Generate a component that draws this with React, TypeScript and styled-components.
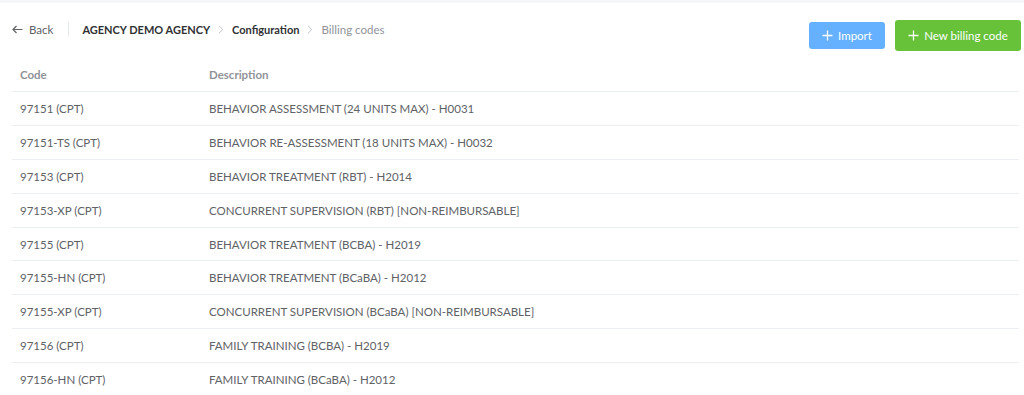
import React from "react";
import styled, { createGlobalStyle } from "styled-components";

const Global = createGlobalStyle`
  html, body { margin: 0; padding: 0; background: #fff; }
  body { font-family: "Lato", "Noto Sans", sans-serif; color: #606266; }
  * { box-sizing: border-box; }
`;

const Page = styled.div`
  width: 1024px;
  height: 395px;
  overflow: hidden;
  border-top: 3px solid #f5f6f8;
`;

const TopBar = styled.div`
  display: flex;
  align-items: center;
  justify-content: space-between;
  padding: 14px 3px 0 12px;
  height: 51px;
`;

const Crumbs = styled.div`
  display: flex;
  align-items: center;
  font-size: 11.5px;
  margin-top: -13px;
`;

const BackLink = styled.span`
  display: flex;
  align-items: center;
  gap: 6px;
  color: #606266;
`;

const Divider = styled.span`
  width: 1px;
  height: 14px;
  background: #e4e7ed;
  margin: 0 13px 0 15px;
`;

const Crumb = styled.span<{ $current?: boolean }>`
  font-weight: ${(p) => (p.$current ? 400 : 700)};
  font-size: ${(p) => (p.$current ? "11.5px" : "11px")};
  color: ${(p) => (p.$current ? "#909399" : "#303133")};
`;

const Sep = styled.span`
  display: flex;
  margin: 0 8px;
`;

const Actions = styled.div`
  display: flex;
  align-items: center;
  gap: 10px;
`;

const Button = styled.button<{ $variant: "blue" | "green" }>`
  display: flex;
  align-items: center;
  justify-content: center;
  gap: 5px;
  border: none;
  border-radius: 3px;
  color: #fff;
  font-family: inherit;
  font-size: 11.5px;
  padding: 0;
  background: ${(p) => (p.$variant === "blue" ? "#66b1ff" : "#67c23a")};
  width: ${(p) => (p.$variant === "blue" ? "76px" : "126px")};
  height: ${(p) => (p.$variant === "blue" ? "27px" : "31px")};
`;

const Table = styled.div`
  margin: 0 5px 0 12px;
`;

const Row = styled.div<{ $head?: boolean }>`
  display: grid;
  grid-template-columns: 189px 1fr;
  align-items: center;
  height: ${(p) => (p.$head ? "38px" : "33.9px")};
  border-bottom: 1px solid #ebeef5;
  font-size: 11.5px;
  color: ${(p) => (p.$head ? "#909399" : "#606266")};
  font-weight: ${(p) => (p.$head ? 700 : 400)};
  padding-left: 8px;
  padding-top: ${(p) => (p.$head ? "4px" : "0")};
`;

const Cell = styled.div`
  white-space: nowrap;
`;

const Plus = () => (
  <svg width="11" height="11" viewBox="0 0 11 11" fill="none" stroke="currentColor" strokeWidth="1.3">
    <path d="M5.5 0.5v10M0.5 5.5h10" />
  </svg>
);

const Chevron = () => (
  <svg width="6" height="9" viewBox="0 0 6 9" fill="none" stroke="#c0c4cc" strokeWidth="1">
    <path d="M1 0.8L4.8 4.5 1 8.2" />
  </svg>
);

const Arrow = () => (
  <svg width="11" height="9" viewBox="0 0 11 9" fill="none" stroke="#606266" strokeWidth="1.2">
    <path d="M10.5 4.5H1M4.5 1L1 4.5 4.5 8" />
  </svg>
);

const rows: [string, string][] = [
  ["97151 (CPT)", "BEHAVIOR ASSESSMENT (24 UNITS MAX) - H0031"],
  ["97151-TS (CPT)", "BEHAVIOR RE-ASSESSMENT (18 UNITS MAX) - H0032"],
  ["97153 (CPT)", "BEHAVIOR TREATMENT (RBT) - H2014"],
  ["97153-XP (CPT)", "CONCURRENT SUPERVISION (RBT) [NON-REIMBURSABLE]"],
  ["97155 (CPT)", "BEHAVIOR TREATMENT (BCBA) - H2019"],
  ["97155-HN (CPT)", "BEHAVIOR TREATMENT (BCaBA) - H2012"],
  ["97155-XP (CPT)", "CONCURRENT SUPERVISION (BCaBA) [NON-REIMBURSABLE]"],
  ["97156 (CPT)", "FAMILY TRAINING (BCBA) - H2019"],
  ["97156-HN (CPT)", "FAMILY TRAINING (BCaBA) - H2012"],
];

export default function App() {
  return (
    <Page>
      <Global />
      <TopBar>
        <Crumbs>
          <BackLink>
            <Arrow />
            Back
          </BackLink>
          <Divider />
          <Crumb>AGENCY DEMO AGENCY</Crumb>
          <Sep>
            <Chevron />
          </Sep>
          <Crumb>Configuration</Crumb>
          <Sep>
            <Chevron />
          </Sep>
          <Crumb $current>Billing codes</Crumb>
        </Crumbs>
        <Actions>
          <Button $variant="blue">
            <Plus />
            Import
          </Button>
          <Button $variant="green">
            <Plus />
            New billing code
          </Button>
        </Actions>
      </TopBar>
      <Table>
        <Row $head>
          <Cell>Code</Cell>
          <Cell>Description</Cell>
        </Row>
        {rows.map(([c, d]) => (
          <Row key={c}>
            <Cell>{c}</Cell>
            <Cell>{d}</Cell>
          </Row>
        ))}
      </Table>
    </Page>
  );
}
